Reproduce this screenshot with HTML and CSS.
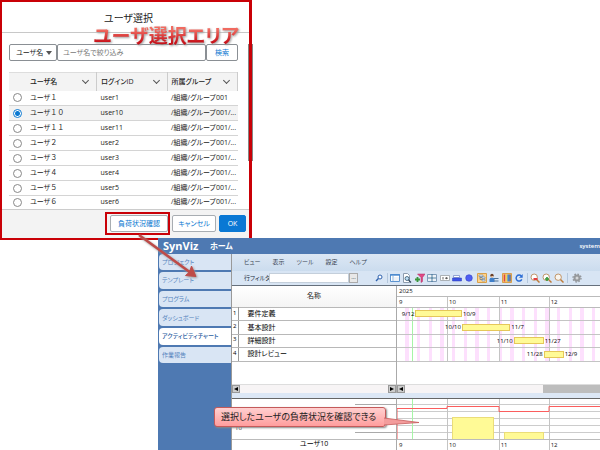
FILE: index.html
```
<!DOCTYPE html>
<html lang="ja">
  <head>
    <meta charset="utf-8">
    <meta name="viewport" content="width=device-width, initial-scale=1.0">
    <title>ユーザ選択 - SynViz</title>
    <link rel="stylesheet" href="styles.css">
  </head>

  <body>
    <form class="dialog">
      <h1>ユーザ選択</h1>
      <div class="dialog-body">
        <div class="search">
          <span class="select"><select aria-label="検索項目"><option>ユーザ名</option></select></span>
          <input type="text" aria-label="ユーザ名" placeholder="ユーザ名で絞り込み">
          <button type="button">検索</button>
        </div>
        <table class="users">
          <thead>
            <tr><th class="radio"></th><th class="name"><span>ユーザ名</span></th><th><span>ログインID</span></th><th><span>所属グループ</span></th></tr>
          </thead>
          <tbody>
            <tr><td><input type="radio" name="user" id="u1"></td><td><label for="u1">ユーザ<span>１</span></label></td><td>user1</td><td>/組織/グループ001</td></tr>
            <tr class="selected"><td><input type="radio" name="user" id="u10" checked></td><td><label for="u10">ユーザ<span>１０</span></label></td><td>user10</td><td>/組織/グループ001/...</td></tr>
            <tr><td><input type="radio" name="user" id="u11"></td><td><label for="u11">ユーザ<span>１１</span></label></td><td>user11</td><td>/組織/グループ001/...</td></tr>
            <tr><td><input type="radio" name="user" id="u2"></td><td><label for="u2">ユーザ<span>２</span></label></td><td>user2</td><td>/組織/グループ001/...</td></tr>
            <tr><td><input type="radio" name="user" id="u3"></td><td><label for="u3">ユーザ<span>３</span></label></td><td>user3</td><td>/組織/グループ001/...</td></tr>
            <tr><td><input type="radio" name="user" id="u4"></td><td><label for="u4">ユーザ<span>４</span></label></td><td>user4</td><td>/組織/グループ001/...</td></tr>
            <tr><td><input type="radio" name="user" id="u5"></td><td><label for="u5">ユーザ<span>５</span></label></td><td>user5</td><td>/組織/グループ001/...</td></tr>
            <tr><td><input type="radio" name="user" id="u6"></td><td><label for="u6">ユーザ<span>６</span></label></td><td>user6</td><td>/組織/グループ001/...</td></tr>
          </tbody>
        </table>
        <div class="thumb"></div>
      </div>
      <div class="dialog-footer">
        <span class="marked"><button type="button">負荷状況確認</button></span>
        <button type="button">キャンセル</button>
        <button type="button" class="ok">OK</button>
      </div>
      <div class="area-title">ユーザ選択エリア</div>
    </form>

    <div class="app">
      <header>
        <span class="logo">SynViz</span>
        <span class="home">ホーム</span>
        <span class="account">system</span>
      </header>
      <div class="columns">
        <nav>
          <a href="#">プロジェクト</a>
          <a href="#">テンプレート</a>
          <a href="#">プログラム</a>
          <a href="#">ダッシュボード</a>
          <a href="#" class="active">アクティビティチャート</a>
          <a href="#">作業報告</a>
        </nav>
        <main>
          <div class="menu">
            <a href="#">ビュー</a><a href="#">表示</a><a href="#">ツール</a><a href="#">設定</a><a href="#">ヘルプ</a>
          </div>
          <div class="toolbar">
            <label for="filter">行フィルタ</label>
            <input type="text" id="filter">
            <button type="button" class="more">...</button>
            <div class="icons find">
              <svg viewBox="0 0 10 10"><circle cx="6" cy="4" r="2" fill="#fff" stroke="#2f62ae"/><path d="M4.4 5.6L2 8" stroke="#2f62ae" stroke-width="1.4"/></svg>
            </div>
            <div class="icons view">
              <svg viewBox="0 0 10 10"><path d="M.5 1.5h9v7h-9z" fill="#fff" stroke="#5d94d0"/><path d="M0 2h10" stroke="#4787cf" stroke-width="1.4"/><path d="M3 3v5" stroke="#8bb5df"/><path d="M4 5h5M4 7h5" stroke="#c6d4e4" stroke-width=".6"/></svg>
              <svg viewBox="0 0 10 10"><path d="M1.5 .5h4l2 2v7h-6z" fill="#fff" stroke="#8d9cae"/><circle cx="5" cy="5.5" r="2" fill="#bfe0f5" stroke="#33556f" stroke-width=".8"/><path d="M6.5 7L9 9.5" stroke="#33475c" stroke-width="1.3"/></svg>
              <svg viewBox="0 0 10 10"><path d="M2.5 1H10L7.5 4.5V8.5L6 9.5V4.5z" fill="#e04a86" stroke="#b32b60" stroke-width=".5"/><path d="M0 6.5h5M2.5 4v5" stroke="#39963c" stroke-width="1.8"/></svg>
              <svg viewBox="0 0 10 10"><path d="M.5 1.5h9v7h-9z" fill="#fff" stroke="#7f9cba"/><path d="M5 1v8M1 5h8" stroke="#4a7c9d" stroke-width="1.2"/><path d="M1 3h8M1 7h8" stroke="#c2d4e4" stroke-width=".6"/></svg>
              <svg viewBox="0 0 10 10"><path d="M.5 2.5h9v5h-9z" fill="#fff" stroke="#9a9fa5" stroke-width=".8"/><path d="M3 4v2.5M5 5.2h3M6.5 4.2v2" stroke="#555" stroke-width=".9"/></svg>
              <svg viewBox="0 0 10 10"><path d="M1.5 2.5h6v2h-6z" fill="#fff" stroke="#7d91c9" stroke-width=".8"/><path d="M.5 5h9v3h-9z" fill="#3f54e6" stroke="#2a3bbb" stroke-width=".5"/></svg>
              <svg viewBox="0 0 10 10"><circle cx="5" cy="5" r="3.3" fill="#4f5ff3" stroke="#3541c4" stroke-width=".6"/></svg>
              <svg viewBox="0 0 10 10"><path d="M.5 .5h9v9h-9z" fill="#ffd28a" stroke="#d9a04a"/><path d="M3 3v3.500h3M3 4.500h3" stroke="#5f7692" stroke-width=".7"/><path d="M2 2h4v1.500H2zM5 4h3v1.500H5zM5 6.500h3V8H5z" fill="#e6f0fa" stroke="#51779f" stroke-width=".5"/></svg>
              <svg viewBox="0 0 10 10"><circle cx="3" cy="2.5" r="1.7" fill="#6a3f28"/><path d="M.5 9V6.5Q.5 4.5 3 4.5T5.5 6.5V9z" fill="#3e7fca"/><path d="M2.2 3h1.800v1.500H2.200z" fill="#efc298"/><path d="M5 5.500H9.500M5 8H9.500" stroke="#507294" stroke-width="1.2"/></svg>
              <svg viewBox="0 0 10 10"><path d="M.5 .5h9v9h-9z" fill="#ffc271" stroke="#d9a04a"/><path d="M2.5 1.5v7" stroke="#d94747" stroke-width="1.5"/><path d="M4.5 1.5v7" stroke="#e6d45c" stroke-width="1.5"/><path d="M6.3 1.5v7" stroke="#4588d3" stroke-width="1.8"/><path d="M8 1.5v7" stroke="#335aa6" stroke-width="1.3"/></svg>
              <svg viewBox="0 0 10 10"><path d="M7.3 3A3 3 0 1 0 7.8 6.4" stroke="#2b6cd4" stroke-width="1.5"/><path d="M8.7 1v3.700H5z" fill="#2b6cd4"/></svg>
            </div>
            <div class="icons scale">
              <svg viewBox="0 0 10 10"><circle cx="4.2" cy="4.2" r="3.2" fill="#fff" stroke="#c09569"/><path d="M6.5 6.5L9.5 9.5" stroke="#bd7c3b" stroke-width="1.5"/><path d="M3.5 6h4" stroke="#e33d3d" stroke-width="2"/></svg>
              <svg viewBox="0 0 10 10"><circle cx="4.2" cy="4.2" r="3.2" fill="#fff" stroke="#c09569"/><path d="M6.5 6.5L9.5 9.5" stroke="#bd7c3b" stroke-width="1.5"/><path d="M3 6h4M5 4v4" stroke="#3a9b3e" stroke-width="1.7"/></svg>
              <svg viewBox="0 0 10 10"><circle cx="4.2" cy="4.2" r="3.2" fill="#f8f5ef" stroke="#c09569"/><path d="M6.5 6.5L9.5 9.5" stroke="#bd7c3b" stroke-width="1.5"/></svg>
            </div>
            <div class="icons setup">
              <svg viewBox="0 0 10 10"><circle cx="5" cy="5" r="4" stroke="#8f9296" stroke-width="1.3" stroke-dasharray="1.57"/><circle cx="5" cy="5" r="2.5" fill="#d5d7d9" stroke="#96999c" stroke-width="2"/></svg>
            </div>
          </div>

          <div class="split gantt">
            <div class="left">
              <table class="tasks">
                <thead><tr><th colspan="2">名称</th></tr></thead>
                <tbody>
                  <tr><td class="no">1</td><td>要件定義</td></tr>
                  <tr><td class="no">2</td><td>基本設計</td></tr>
                  <tr><td class="no">3</td><td>詳細設計</td></tr>
                  <tr><td class="no">4</td><td>設計レビュー</td></tr>
                </tbody>
              </table>
              <div class="scroll"><button type="button" class="prev" aria-label="左へ"></button><button type="button" class="next" aria-label="右へ"></button></div>
            </div>
            <div class="right">
              <div class="year">2025</div>
              <div class="months"><span style="--days:30">9</span><span style="--days:31">10</span><span style="--days:30">11</span><span style="--days:31">12</span></div>
              <div class="rows">
                <div class="lines"><i style="--days:30"></i><i style="--days:31"></i><i style="--days:30"></i><i style="--days:31"></i></div>
                <div class="today"></div>
                <div class="task" style="--start:11;--days:28"><span>9/12</span><b></b><span>10/9</span></div>
                <div class="task" style="--start:39;--days:29"><span>10/10</span><b></b><span>11/7</span></div>
                <div class="task" style="--start:70;--days:18"><span>11/10</span><b></b><span>11/27</span></div>
                <div class="task" style="--start:88;--days:12"><span>11/28</span><b></b><span>12/9</span></div>
              </div>
              <div class="scroll"><button type="button" class="prev" aria-label="左へ"></button><div class="bar"></div></div>
            </div>
          </div>

          <div class="split load">
            <div class="left">
              <div class="scale-area"><span>10</span><div class="ticks"></div></div>
              <div class="user">ユーザ10</div>
            </div>
            <div class="right">
              <div class="plot">
                <div class="lines"><i style="--days:30"></i><i style="--days:31"></i><i style="--days:30"></i><i style="--days:31"></i></div>
                <div class="today"></div>
                <div class="amount" style="--gap:33;--days:25;--value:22"></div>
                <div class="amount" style="--gap:6;--days:24;--value:7"></div>
                <svg class="limit"><path d="M0 40V9.5H50V7.5H102V12.5H152V7.5H2000"/></svg>
              </div>
              <div class="months"><span style="--days:30">9</span><span style="--days:31">10</span><span style="--days:30">11</span><span style="--days:31">12</span></div>
            </div>
            <div class="callout">
              選択したユーザの負荷状況を確認できる
              <svg viewBox="0 0 36 10"><path d="M0 1L35 5.500L0 8" fill="#f39c9c" stroke="#c45a5a" stroke-width=".8"/></svg>
            </div>
          </div>
        </main>
      </div>
    </div>

    <svg class="arrow" viewBox="0 0 66 50">
      <path d="M4 3L56 41" stroke="#be4b48" stroke-width="2.5"/>
      <path d="M61 44.5L50.500 43.500L54.500 40L56.500 34z" fill="#be4b48" stroke="#be4b48"/>
    </svg>
  </body>
</html>
```

FILE: styles.css
```
* {
    box-sizing: border-box;
}
html {
    height: 100%;
    overflow: hidden;
}
body {
    margin: 0;
    min-height: 100vh;
    display: flex;
    flex-direction: column;
    position: relative;
    background: #fff;
    color: #222;
    font-family: "Open Sans", "Noto Sans CJK JP", sans-serif;
    font-size: 7px;
    line-height: 10px;
    font-feature-settings: "palt";
}
button, input, select {
    font: inherit;
    font-feature-settings: inherit;
    color: inherit;
    margin: 0;
    padding: 0;
}
a {
    text-decoration: none;
    color: inherit;
}

/* user selection dialog */
.dialog {
    position: relative;
    width: 42%;
    border: 2px solid #c90007;
    border-width: 2px 3px 2px 2px;
}
.dialog h1 {
    margin: 0;
    height: 31px;
    padding: 10px 0 0 6px;
    line-height: 12px;
    text-align: center;
    font-size: 10px;
    font-weight: normal;
    border-bottom: 1px solid #c8c8c8;
}
.dialog-body {
    position: relative;
    padding: 11px 11px 0 7px;
}
.search {
    display: flex;
    height: 17px;
    margin-bottom: 11px;
}
.search input,
.search button,
.select {
    border: 1px solid #8a8f94;
    border-radius: 2px;
    background: #fff;
}
.select {
    width: 48px;
    position: relative;
}
.select select {
    width: 100%;
    height: 100%;
    padding-left: 6px;
    border: 0;
    background: none;
    appearance: none;
}
.select::after {
    content: "";
    position: absolute;
    right: 4px;
    top: 6px;
    border: 3px solid transparent;
    border-top: 4px solid #555;
    border-bottom: 0;
}
.search input {
    flex: 1;
    min-width: 0;
    padding-left: 5px;
}
.search input::placeholder {
    color: #777;
}
.search button {
    width: 32px;
    color: #0a78d1;
}
.users {
    width: 100%;
    border-collapse: collapse;
    table-layout: fixed;
}
.users th {
    height: 18px;
    padding: 0 0 0 4px;
    text-align: left;
    font-weight: 500;
    background: #f3f3f3;
    border-top: 1px solid #ddd;
    border-right: 1px solid #ccc;
}
.users th.radio {
    width: 17px;
    border-right: 0;
}
.users th span {
    display: flex;
    justify-content: space-between;
    align-items: center;
}
.users th span::after {
    content: "";
    width: 4px;
    height: 4px;
    margin: 0 8px 3px 0;
    border: solid #555;
    border-width: 0 1px 1px 0;
    transform: rotate(45deg);
}
.users td {
    height: 15px;
    padding: 0 0 0 4px;
    white-space: nowrap;
    border-bottom: 1px solid #d4d4d4;
}
.users tr:last-child td {
    height: 13px;
    border-bottom: 0;
}
.users .selected td {
    background: #f3f3f3;
}
/* full-width digits keep their full width */
.users label span {
    font-feature-settings: normal;
}
.users input {
    display: block;
    width: 9px;
    height: 9px;
    appearance: none;
    border: 1px solid #888;
    border-radius: 50%;
    background: #fff;
}
.users input:checked {
    border-color: #0a78d1;
    background: radial-gradient(#0a78d1 2px, #fff 3px);
}
.thumb {
    position: absolute;
    right: -4px;
    top: 11px;
    width: 5px;
    height: 117px;
    background: #858585;
    z-index: -1;
}
.dialog-footer {
    display: flex;
    justify-content: flex-end;
    align-items: center;
    gap: 3px;
    height: 29px;
    padding: 0 3px 0 0;
    background: #f3f3f3;
    border-top: 1px solid #ccc;
}
.dialog-footer button {
    height: 17px;
    width: 44px;
    color: #0a78d1;
    background: #fff;
    border: 1px solid #a8adb2;
    border-radius: 2px;
}
.dialog-footer .marked {
    display: flex;
    padding: 1px 0 1px 3px;
    border: 2px solid #c90007;
    margin-right: -1px;
}
.dialog-footer .marked button {
    width: 58px;
}
.dialog-footer .ok {
    width: 27px;
    color: #fff;
    background: #0a78d4;
    border-color: #0a78d4;
}
.area-title {
    position: absolute;
    right: 10px;
    top: 24px;
    font-size: 19px;
    line-height: 20px;
    font-weight: bold;
    white-space: nowrap;
    color: transparent;
    background: linear-gradient(#f06a60 20%, #c8141c 80%);
    -webkit-background-clip: text;
    background-clip: text;
    filter: drop-shadow(1px 1px 1px #999);
}

/* SynViz window */
.app {
    position: relative;
    flex: 1;
    display: flex;
    flex-direction: column;
    margin: -2px 0 0 158px;
    background: #4e79b2;
    font-size: 6px;
    line-height: 8px;
}
.app header {
    display: flex;
    align-items: center;
    height: 16px;
    padding-left: 5px;
    color: #fff;
    font-weight: bold;
}
.logo {
    width: 47px;
    font-family: "Open Sans", sans-serif;
    font-size: 11px;
}
.home {
    font-size: 8px;
}
.account {
    margin-left: auto;
    font-weight: 600;
}
.columns {
    flex: 1;
    display: flex;
}
nav {
    display: grid;
    grid-auto-rows: 1fr;
    gap: 2px;
    width: 73px;
    height: 110px;
    padding-left: 1px;
}
nav a {
    display: flex;
    align-items: center;
    padding-left: 3px;
    color: #5583bd;
    background: #d9e5f4;
    border-radius: 4px 0 0 4px;
    white-space: nowrap;
}
nav .active {
    color: #2d619f;
    background: #fff;
    font-weight: 500;
}
main {
    --day: calc(5px / 3);
    flex: 1;
    min-width: 0;
    display: flex;
    flex-direction: column;
    background: #fff;
    border-left: 1px solid #999;
}
.menu {
    display: flex;
    align-items: center;
    gap: 12px;
    height: 17px;
    padding-left: 12px;
    color: #3b4654;
    background: linear-gradient(#dce7f4, #cbdcee);
}
.toolbar {
    display: flex;
    align-items: center;
    height: 15px;
    padding-left: 12px;
    color: #26323f;
    background: #d8e5f4;
    border-bottom: 1px solid #66707c;
}
.toolbar label {
    width: 25px;
    white-space: nowrap;
}
.toolbar input {
    width: 80px;
    height: 10px;
    border: 1px solid #c4cfdb;
    background: #fff;
}
.toolbar .more {
    width: 9px;
    height: 10px;
    line-height: 5px;
    border: 1px solid #aaa;
    background: #e8e8e8;
}
.icons {
    display: flex;
    justify-content: space-between;
    flex: none;
    padding-right: 3px;
}
.icons + .icons {
    padding-left: 2px;
    border-left: 1px solid #b4c7dc;
}
.icons svg {
    width: 10px;
    height: 10px;
    fill: none;
}
.find {
    margin-left: 16px;
}
.view {
    width: 140px;
}
.scale {
    width: 40px;
}
.icons.setup {
    padding-left: 4px;
}
.split {
    display: grid;
    grid-template-columns: 165px 1fr;
    position: relative;
}
.left {
    border-right: 1px solid #aaa;
}
.right {
    min-width: 0;
    overflow: hidden;
}
.tasks {
    width: 100%;
    height: 76px;
    margin-bottom: 22px;
    border-collapse: collapse;
    font-size: 7px;
}
.tasks th {
    height: 22px;
    padding: 0;
    font-weight: normal;
    background: linear-gradient(#fff, #f4f4f4);
}
.tasks td {
    padding: 0 0 0 9px;
    border: 1px solid #b8b8b8;
    border-right: 0;
    border-left: 0;
    color: #000;
}
.tasks .no {
    width: 6px;
    padding: 0 0 3px 1px;
    font-size: 6px;
    line-height: 6px;
    border-right: 1px solid #999;
}
.year,
.months {
    height: 11px;
    line-height: 10px;
    color: #111;
    border-bottom: 1px solid #bbb;
}
.year {
    padding-left: 2px;
}
.months,
.lines {
    display: flex;
}
.months span,
.lines i {
    flex: none;
    width: calc(var(--days) * var(--day));
    padding-left: 1px;
    border-left: 1px solid #c4c4c4;
}
.months span:first-child,
.lines i:first-child {
    border-left-color: transparent;
}
.rows {
    position: relative;
    display: grid;
    grid-auto-rows: 1fr;
    height: 54px;
    margin-bottom: 22px;
    /* weekends */
    background: repeating-linear-gradient(90deg, transparent 0 calc(5 * var(--day)), #fde0fd calc(5 * var(--day)) calc(7 * var(--day)));
}
.lines {
    position: absolute;
    inset: 0;
}
.today {
    position: absolute;
    top: 0;
    bottom: 0;
    left: calc(9 * var(--day));
    width: 1px;
    background: #a6f5a6;
}
.task {
    position: relative;
    display: grid;
    grid-template-columns: calc(var(--start) * var(--day)) calc(var(--days) * var(--day)) 1fr;
    align-items: center;
    border-bottom: 1px solid #c4c4c4;
    color: #000;
}
.task span {
    padding: 0 1px;
}
.task span:first-child {
    justify-self: end;
}
.task b {
    height: 7px;
    background: #fffa96;
    border: 1px solid #e5c75a;
}
.scroll {
    display: flex;
    justify-content: space-between;
    height: 9px;
    background: #f7f4f5;
    border-top: 1px solid #ddd;
}
.scroll button {
    display: flex;
    align-items: center;
    justify-content: center;
    width: 8px;
    height: 8px;
    border: 1px solid #999;
    background: #ccc;
}
.scroll button::after {
    content: "";
    border: 2px solid transparent;
}
.scroll .prev::after {
    border-right: 4px solid #000;
    border-left: 0;
}
.scroll .next::after {
    border-left: 4px solid #000;
    border-right: 0;
}
.scroll .bar {
    flex: 1;
    margin-left: 138px;
    background: #bdbdbd;
}

/* load chart */
.load {
    flex: 1;
    grid-template-rows: 1fr;
    border-top: 5px solid #dce7f5;
}
.load .left,
.load .right {
    border-top: 1px solid #666;
}
.scale-area {
    display: flex;
    height: 41px;
    padding-left: 3px;
    justify-content: space-between;
    align-items: flex-end;
    border-bottom: 1px solid #bbb;
}
.scale-area span {
    padding-bottom: 7px;
}
.ticks {
    width: 41px;
    height: 35px;
    border-top: 1px solid #aaa;
    background: linear-gradient(#aaa, #aaa) 0 27px / 100% 1px no-repeat;
}
.user {
    text-align: center;
    font-size: 7px;
    color: #000;
}
.plot {
    position: relative;
    display: flex;
    align-items: flex-end;
    height: 41px;
    border-bottom: 1px solid #bbb;
    background: repeating-linear-gradient(transparent 0 5px, #ccc 5px 6px, transparent 6px 7px);
}
.load .months {
    border-bottom: 0;
}
.amount {
    position: relative;
    width: calc(var(--days) * var(--day));
    height: calc(var(--value) * 1px);
    margin-left: calc(var(--gap) * var(--day));
    background: #fffa96;
    border: 1px solid #ebdd79;
    border-bottom: 0;
}
.limit {
    position: absolute;
    left: 0;
    top: 0;
    width: 100%;
    height: 40px;
    fill: none;
    stroke: #fb5e5e;
}
.callout {
    position: absolute;
    left: -18px;
    top: 9px;
    width: 172px;
    padding-left: 6px;
    color: #222;
    font-size: 9px;
    line-height: 18px;
    white-space: nowrap;
    background: linear-gradient(#ffd0d0, #ff9d9d);
    border: 1px solid #c45a5a;
    border-radius: 3px;
    box-shadow: 1px 1px 2px #888;
}
.callout svg {
    position: absolute;
    left: 169px;
    top: 9px;
    width: 36px;
    height: 10px;
}

/* pointer from the button to the window */
.arrow {
    position: absolute;
    left: 135px;
    top: 232px;
    width: 66px;
    height: 50px;
    fill: none;
    filter: drop-shadow(1px 1px 1px #999);
}
```
